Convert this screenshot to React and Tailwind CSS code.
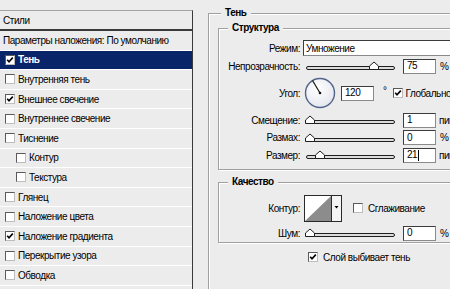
import React from 'react';

const Check = ({ checked, className = '' }) => (
  <span className={`inline-flex w-[10px] h-[10px] shrink-0 items-center justify-center bg-white border border-[#5a5a5a] border-r-[#bdbdbd] border-b-[#bdbdbd] ${className}`}>
    {checked && (
      <svg width="8" height="8" viewBox="0 0 8 8">
        <path d="M1.2 3.8 L3 5.8 L6.8 1.6" fill="none" stroke="#000" strokeWidth="1.6" />
      </svg>
    )}
  </span>
);

const Slider = ({ pos }) => (
  <svg width="92" height="10" viewBox="0 0 92 10" className="shrink-0">
    <rect x="1.5" y="5.5" width="88" height="3" rx="1.5" fill="#dcdcdc" stroke="#1e1e1e" strokeWidth="1" />
    <path d={`M${pos - 4.5} 8.5 L${pos - 4.5} 5 L${pos} 1 L${pos + 4.5} 5 L${pos + 4.5} 8.5 Z`} fill="#fff" stroke="#1e1e1e" strokeWidth="1" />
  </svg>
);

const Field = ({ value, cursor }) => (
  <div className="w-[33px] h-[15px] shrink-0 bg-white border border-[#8a8a8a] border-t-[#3c3c3c] border-l-[#3c3c3c] flex items-center pl-[3px] leading-none">
    <span>{value}</span>
    {cursor && <span className="ml-[1px] w-px h-[11px] bg-black" />}
  </div>
);

const Row = ({ label, h, children }) => (
  <div className={`flex items-center ${h}`}>
    <span className="w-[72px] text-right shrink-0">{label}</span>
    {children}
  </div>
);

const Dial = () => (
  <svg width="32" height="32" viewBox="0 0 32 32" className="shrink-0">
    <defs>
      <radialGradient id="dial" cx="40%" cy="35%" r="70%">
        <stop offset="0" stopColor="#ffffff" />
        <stop offset="1" stopColor="#e4e6ee" />
      </radialGradient>
    </defs>
    <circle cx="16" cy="16" r="14.5" fill="url(#dial)" stroke="#52648a" strokeWidth="1.4" />
    <line x1="16" y1="16" x2="8.5" y2="3.5" stroke="#111" strokeWidth="1.2" />
    <circle cx="16" cy="16" r="1.3" fill="#111" />
  </svg>
);

const Swatch = () => (
  <svg width="38" height="27" viewBox="0 0 38 27" className="shrink-0">
    <rect x="0.5" y="0.5" width="37" height="26" fill="#fff" stroke="#2a2a2a" />
    <path d="M1 26 L27 1 L27 26 Z" fill="#8c8c8c" />
    <line x1="27.5" y1="1" x2="27.5" y2="26" stroke="#2a2a2a" />
    <rect x="28" y="1" width="9" height="25" fill="#f4f4f4" />
    <path d="M30.5 11 L34.5 11 L32.5 13.5 Z" fill="#000" />
  </svg>
);

const styles = [
  { name: 'Параметры наложения: По умолчанию', plain: true },
  { name: 'Тень', checked: true, active: true },
  { name: 'Внутренняя тень' },
  { name: 'Внешнее свечение', checked: true },
  { name: 'Внутреннее свечение' },
  { name: 'Тиснение' },
  { name: 'Контур', sub: true },
  { name: 'Текстура', sub: true },
  { name: 'Глянец' },
  { name: 'Наложение цвета' },
  { name: 'Наложение градиента', checked: true },
  { name: 'Перекрытие узора' },
  { name: 'Обводка' },
];

export default function App() {
  return (
    <div className="w-[450px] h-[289px] overflow-hidden bg-[#ececec] flex text-[10px] tracking-[-0.45px] text-black font-['Liberation_Sans',Arial,sans-serif]">
      {/* Список стилей */}
      <div className="w-[193px] shrink-0 flex flex-col pt-[10px]">
        <div className="h-[19px] border-t border-[#a4a4a4] border-r border-r-[#3a3a3a] flex items-center pl-[3px] pt-px">
          Стили
        </div>
        <div className="flex-1 border-t-2 border-[#3a3a3a] border-r border-r-[#3a3a3a]">
          {styles.map((s) => (
            <div
              key={s.name}
              className={`h-[19.6px] flex items-center border-b border-white ${s.active ? 'bg-[#0a246a] text-white font-bold' : ''} ${s.plain ? 'pl-[3px]' : s.sub ? 'pl-[16px]' : 'pl-[5px]'}`}
            >
              {!s.plain && <Check checked={s.checked} className="mr-[3px]" />}
              <span>{s.name}</span>
            </div>
          ))}
        </div>
      </div>

      {/* Параметры тени */}
      <div className="flex-1 pl-[15px]">
        <fieldset className="mt-[7px] h-[320px] border border-[#a0a0a0] shadow-[inset_1px_1px_0_#fff,1px_1px_0_#fff] pl-[9px] pt-[3px] mr-[-20px]">
          <legend className="ml-[3px] px-[4px] leading-[12px] font-bold bg-[#ececec]">Тень</legend>

          <fieldset className="border border-[#a0a0a0] shadow-[inset_1px_1px_0_#fff,1px_1px_0_#fff] pl-[9px] pt-[5px] pb-[5px]">
            <legend className="px-[4px] leading-[12px] font-bold bg-[#ececec]">Структура</legend>
            <Row label="Режим:" h="h-[18px]">
              <div className="ml-[3px] w-[200px] h-[16px] bg-white border border-[#8a8a8a] border-t-[#3c3c3c] border-l-[#3c3c3c] flex items-center pl-[2px]">
                Умножение
              </div>
            </Row>
            <Row label="Непрозрачность:" h="h-[18px]">
              <div className="ml-[5px]"><Slider pos={69} /></div>
              <div className="ml-[6px]"><Field value="75" /></div>
              <span className="ml-[4px]">%</span>
            </Row>
            <Row label="Угол:" h="h-[36px]">
              <div className="ml-[4px]"><Dial /></div>
              <div className="ml-[5px]"><Field value="120" /></div>
              <span className="ml-[9px] -mt-[6px]">°</span>
              <Check checked className="ml-[6px]" />
              <span className="ml-[3px] whitespace-nowrap">Глобальное освещение</span>
            </Row>
            <Row label="Смещение:" h="h-[18px]">
              <div className="ml-[5px]"><Slider pos={5} /></div>
              <div className="ml-[6px]"><Field value="1" /></div>
              <span className="ml-[3px]">пикс.</span>
            </Row>
            <Row label="Размах:" h="h-[17px]">
              <div className="ml-[5px]"><Slider pos={5} /></div>
              <div className="ml-[6px]"><Field value="0" /></div>
              <span className="ml-[4px]">%</span>
            </Row>
            <Row label="Размер:" h="h-[18px]">
              <div className="ml-[5px]"><Slider pos={15} /></div>
              <div className="ml-[6px]"><Field value="21" cursor /></div>
              <span className="ml-[3px]">пикс.</span>
            </Row>
          </fieldset>

          <fieldset className="mt-[6px] border border-[#a0a0a0] shadow-[inset_1px_1px_0_#fff,1px_1px_0_#fff] pl-[9px] pt-[3px] pb-[1px]">
            <legend className="px-[4px] leading-[12px] font-bold bg-[#ececec]">Качество</legend>
            <Row label="Контур:" h="h-[34px]">
              <div className="ml-[4px]"><Swatch /></div>
              <Check className="ml-[11px]" />
              <span className="ml-[5px]">Сглаживание</span>
            </Row>
            <Row label="Шум:" h="h-[16px]">
              <div className="ml-[5px]"><Slider pos={5} /></div>
              <div className="ml-[6px]"><Field value="0" /></div>
              <span className="ml-[4px]">%</span>
            </Row>
          </fieldset>

          <div className="mt-[5px] h-[18px] flex items-center pl-[90px]">
            <Check checked />
            <span className="ml-[5px]">Слой выбивает тень</span>
          </div>
        </fieldset>
      </div>
    </div>
  );
}
